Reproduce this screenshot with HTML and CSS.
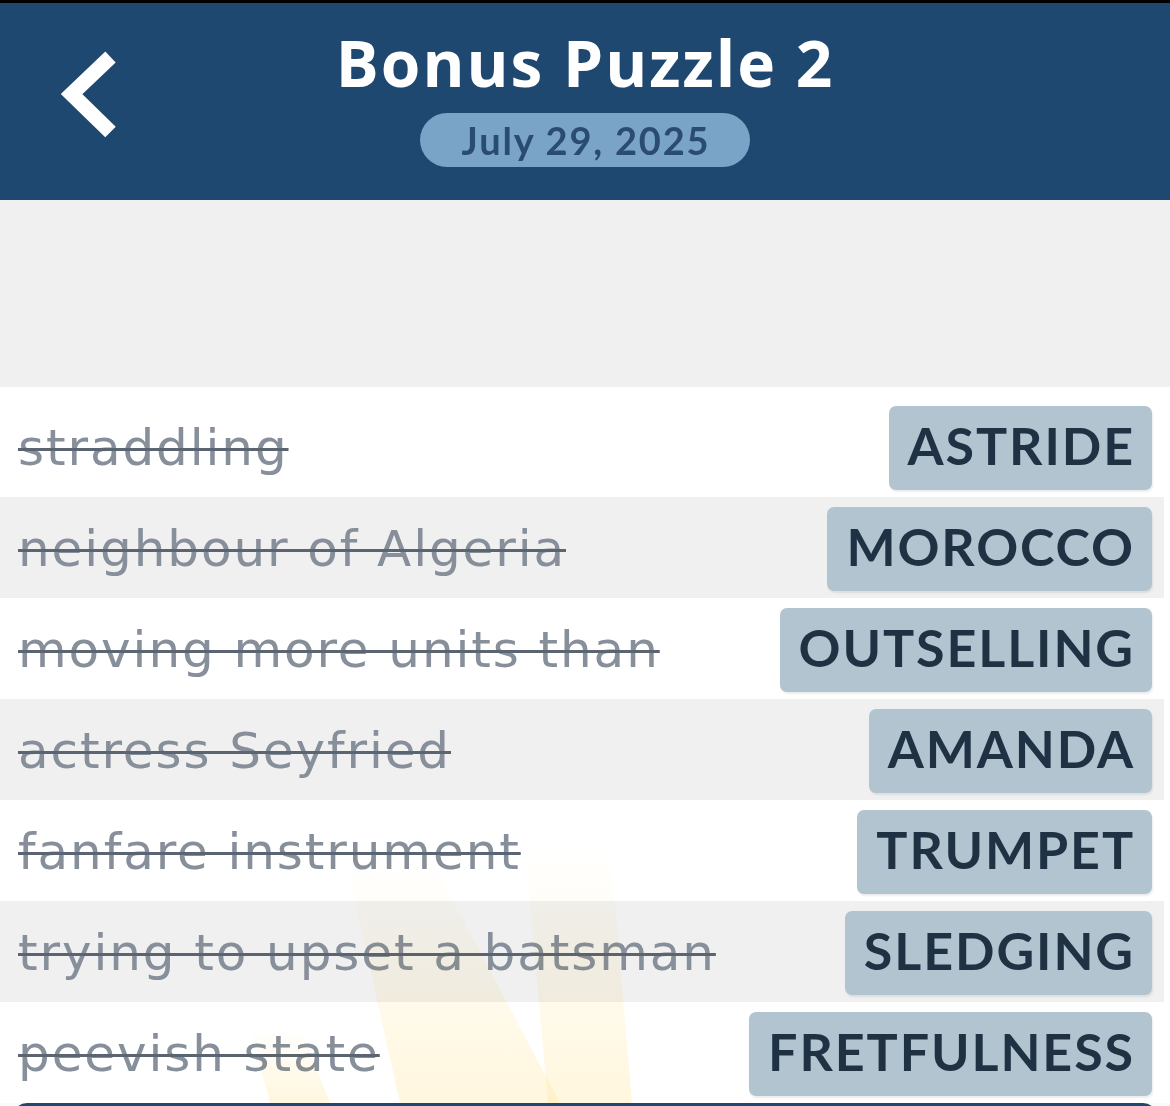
FILE: index.html
```html
<!DOCTYPE html>
<html lang="en">
<head>
    <meta charset="UTF-8">
    <meta name="viewport" content="width=device-width, initial-scale=1.0">
    <title>Bonus Puzzle 2</title>
    <link rel="stylesheet" href="styles.css">
</head>
<body>
    <div class="topbar"></div>

    <header class="header">
        <button class="back" aria-label="Back">
            <svg width="80" height="100" viewBox="0 0 80 100">
                <polyline points="64.5,12 25.6,49 64.5,87" fill="none" stroke="#fff" stroke-width="15" stroke-linejoin="miter"/>
            </svg>
        </button>
        <div class="heading">
            <h1 class="title">Bonus Puzzle 2</h1>
            <div class="date">July 29, 2025</div>
        </div>
    </header>

    <div class="spacer"></div>

    <div class="list-wrap">
        <ul class="clues">
            <li class="clue"><span class="clue-text">straddling</span><span class="answer">ASTRIDE</span></li>
            <li class="clue"><span class="clue-text">neighbour of Algeria</span><span class="answer">MOROCCO</span></li>
            <li class="clue"><span class="clue-text">moving more units than</span><span class="answer">OUTSELLING</span></li>
            <li class="clue"><span class="clue-text">actress Seyfried</span><span class="answer">AMANDA</span></li>
            <li class="clue"><span class="clue-text">fanfare instrument</span><span class="answer">TRUMPET</span></li>
            <li class="clue"><span class="clue-text">trying to upset a batsman</span><span class="answer">SLEDGING</span></li>
            <li class="clue"><span class="clue-text">peevish state</span><span class="answer">FRETFULNESS</span></li>
        </ul>

        <!-- faint light rays from the background -->
        <svg class="rays" width="1170" height="716" viewBox="0 0 1170 716">
            <defs>
                <linearGradient id="ray" x1="0" y1="0" x2="0" y2="1">
                    <stop offset="0" stop-color="#ffe7a0" stop-opacity="0"/>
                    <stop offset="1" stop-color="#ffe7a0" stop-opacity="0.35"/>
                </linearGradient>
            </defs>
            <polygon points="345,470 430,470 560,716 400,716" fill="url(#ray)"/>
            <polygon points="525,460 610,460 632,716 548,716" fill="url(#ray)"/>
            <polygon points="250,640 300,640 330,716 270,716" fill="url(#ray)"/>
        </svg>
    </div>

    <div class="panel"></div>
</body>
</html>
```

FILE: styles.css
```css
body {
    margin: 0;
    height: 1106px;
    overflow: hidden;
    font-family: Lato, "Open Sans", sans-serif;
    background-color: #fafafa;
}
.topbar {
    height: 3px;
    background-color: #000;
}
.header {
    height: 197px;
    background-color: #1f4871;
    display: grid;
    grid-template-columns: 1fr auto 1fr;
}
.back {
    justify-self: start;
    align-self: start;
    margin: 42px 0 0 46px;
    padding: 0;
    border: none;
    background: none;
    cursor: pointer;
}
.back svg {
    display: block;
}
.heading {
    display: flex;
    flex-direction: column;
    align-items: center;
}
.title {
    margin: 22px 0 0;
    font-family: "Open Sans", Lato, sans-serif;
    font-size: 64px;
    line-height: 76px;
    font-weight: 700;
    letter-spacing: 2px;
    color: #fff;
}
.date {
    margin-top: 12px;
    height: 54px;
    padding: 0 40px 0 42px;
    border-radius: 27px;
    background-color: #7aa3c8;
    color: #2b4c71;
    font-size: 38px;
    font-weight: 700;
    letter-spacing: 1.8px;
    line-height: 54px;
}
.spacer {
    height: 187px;
    background-color: #f0f0f0;
}
.list-wrap {
    position: relative;
    background-color: #fff;
    padding-top: 9px;
}
.clues {
    list-style: none;
    margin: 0 6px 0 0;
    padding: 0;
}
.clue {
    height: 101px;
    display: flex;
    justify-content: space-between;
    align-items: flex-start;
    padding: 0 12px 0 18px;
    background-color: #fff;
}
.clue:nth-child(even) {
    background-color: #f0f0f0;
}
.clue-text {
    padding-top: 4px;
    font-family: "DejaVu Sans", sans-serif;
    font-size: 50px;
    letter-spacing: 1.9px;
    line-height: 97px;
    color: #878f9a;
    text-decoration: line-through;
    text-decoration-color: #5b6571;
    text-decoration-thickness: 3px;
    white-space: nowrap;
}
.answer {
    margin-top: 10px;
    height: 84px;
    padding: 0 17px 0 19px;
    border-radius: 7px;
    background-color: #b3c4d1;
    box-shadow: 1px 2px 2px rgba(0, 0, 0, 0.08);
    color: #1f3244;
    font-size: 52px;
    font-weight: 700;
    letter-spacing: 1.9px;
    line-height: 78px;
    white-space: nowrap;
}
.rays {
    position: absolute;
    left: 0;
    top: 0;
    pointer-events: none;
    mix-blend-mode: multiply;
}
.panel {
    height: 30px;
    margin: 0 13px;
    border-radius: 14px 14px 0 0;
    background-color: #1f4871;
}
```
